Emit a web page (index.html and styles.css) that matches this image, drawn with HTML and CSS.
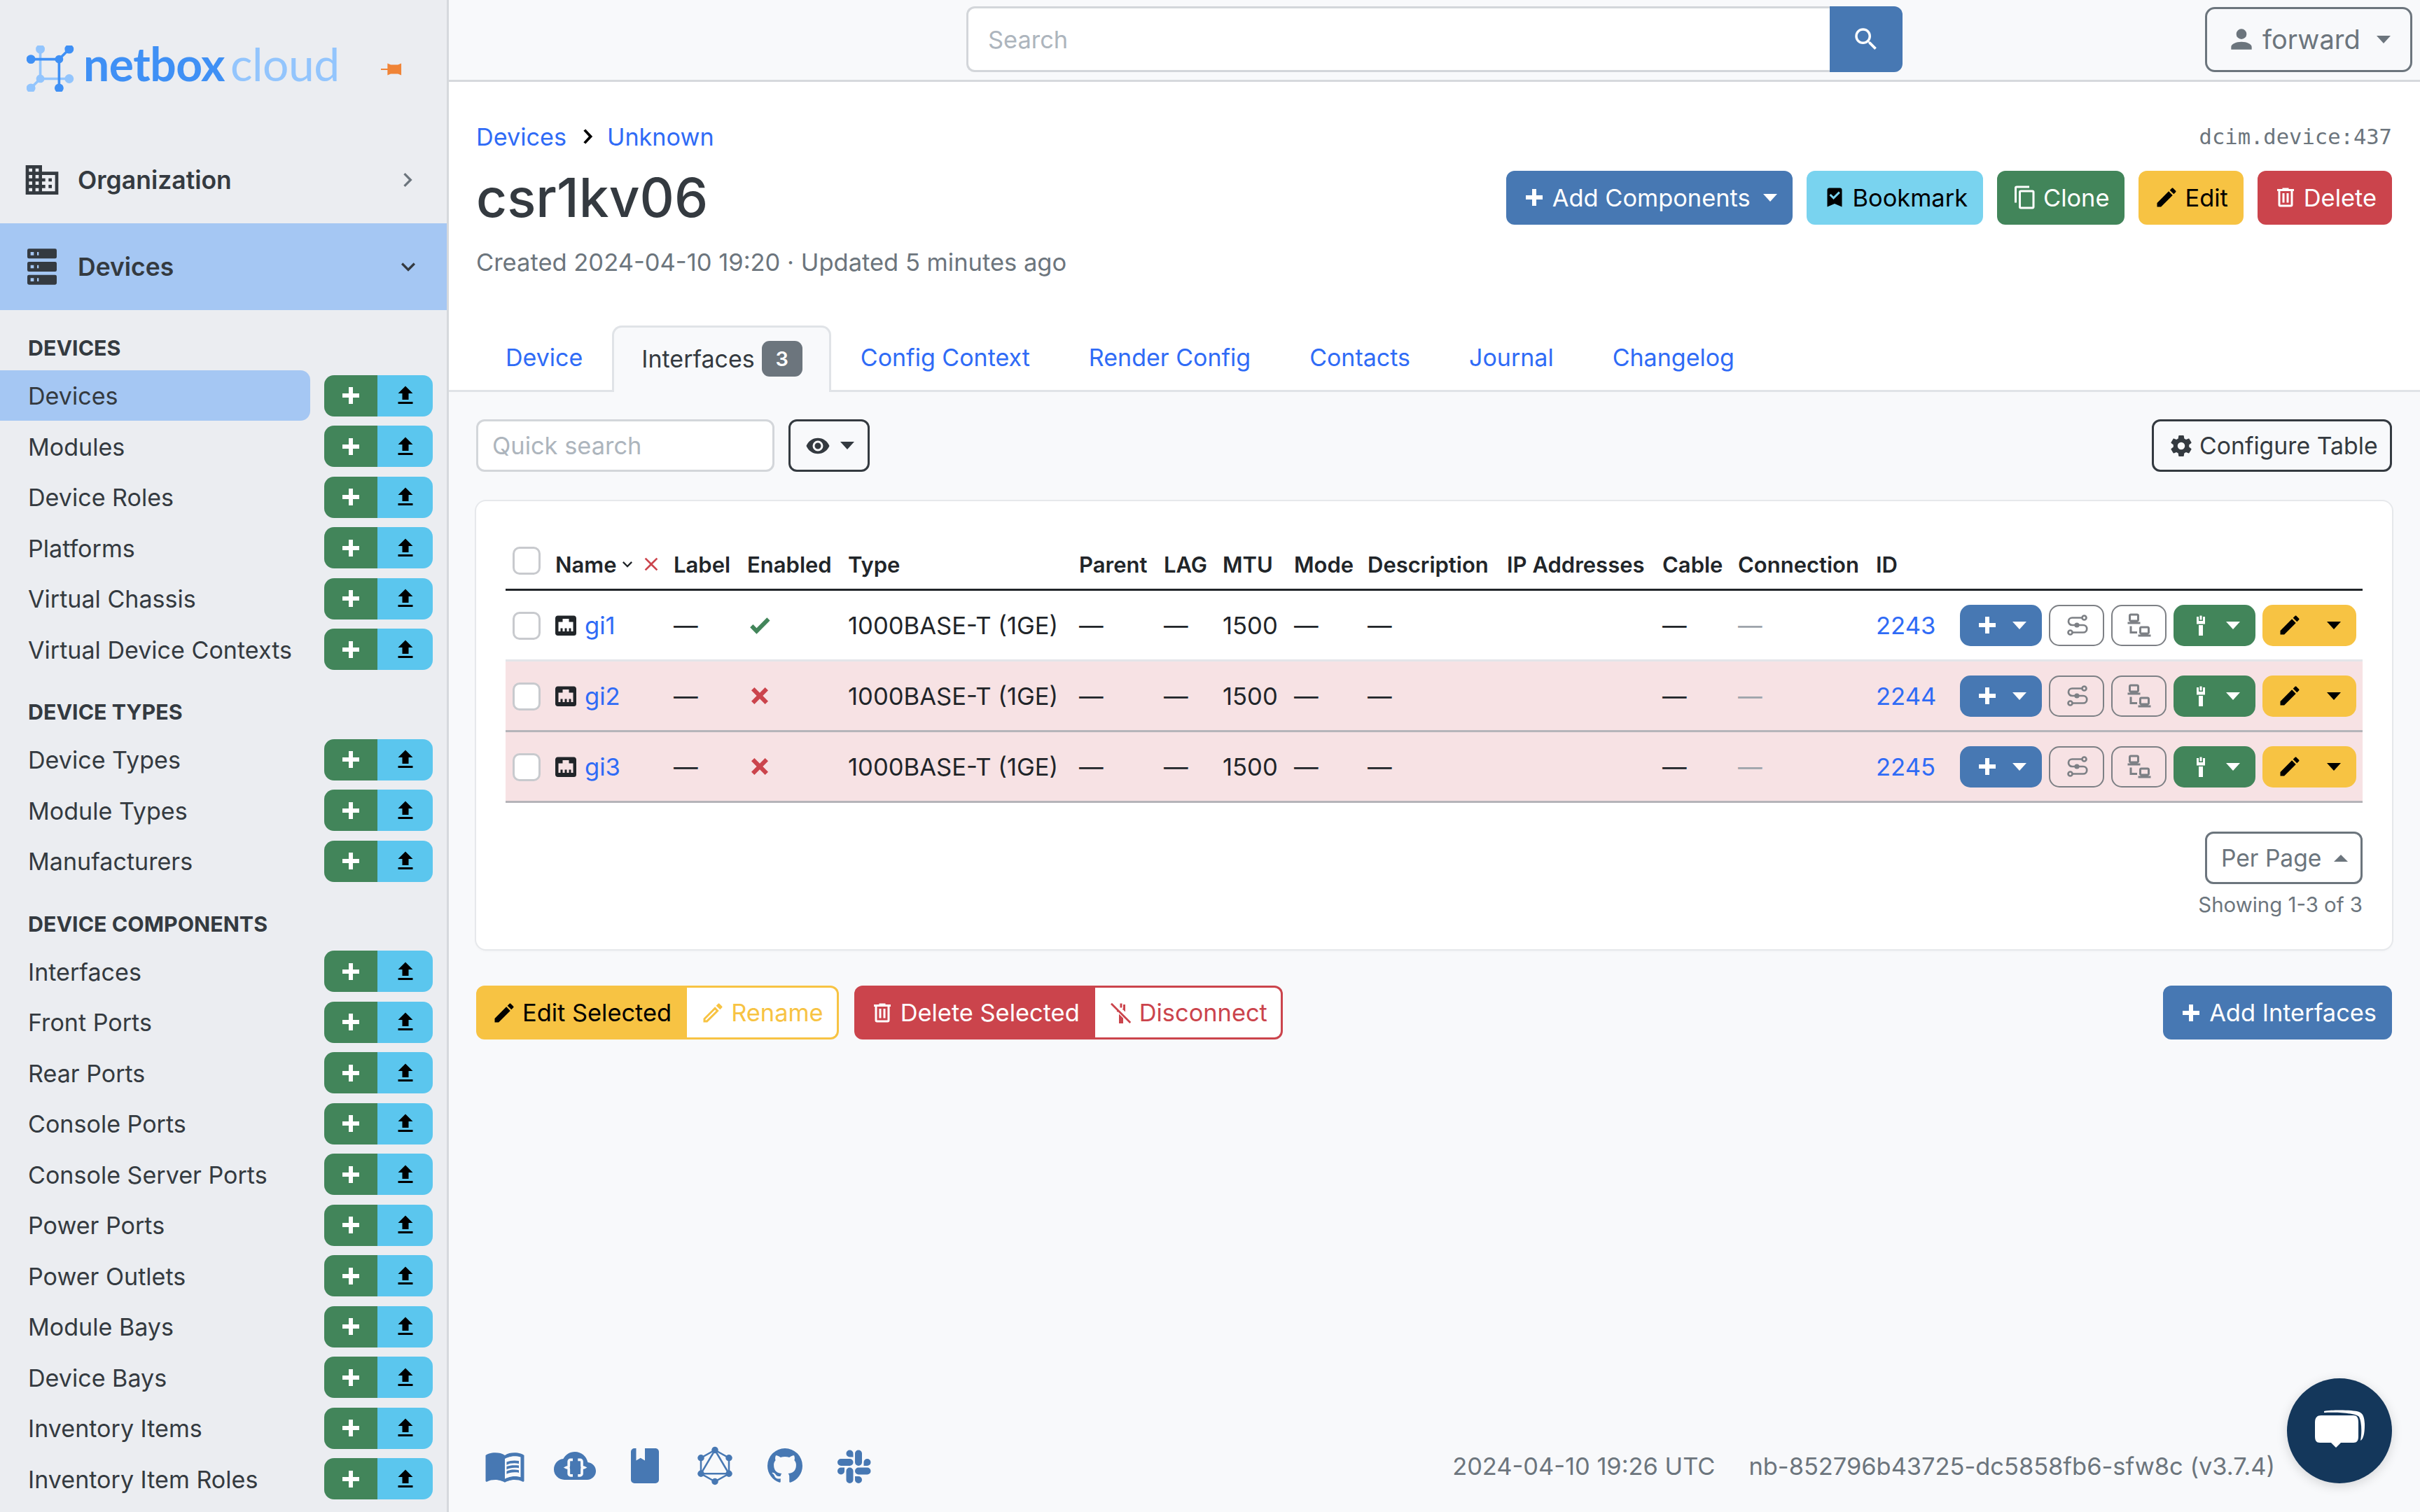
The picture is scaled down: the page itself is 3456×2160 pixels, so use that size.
FILE: index.html
```html
<!DOCTYPE html>
<html lang="en">
<head>
    <meta charset="UTF-8" />
    <title>csr1kv06 | NetBox</title>
    <link rel="stylesheet" href="styles.css">
</head>
<body>
    <svg class="sprite" xmlns="http://www.w3.org/2000/svg">
        <symbol id="i-plus" viewBox="0 0 24 24"><path d="M20 14H14V20H10V14H4V10H10V4H14V10H20V14Z"/></symbol>
        <symbol id="i-upload" viewBox="0 0 24 24"><path d="M9,16V10H5L12,3L19,10H15V16H9M5,20V18H19V20H5Z"/></symbol>
        <symbol id="i-pencil" viewBox="0 0 24 24"><path d="M20.71,7.04C21.1,6.65 21.1,6 20.71,5.63L18.37,3.29C18,2.9 17.35,2.9 16.96,3.29L15.12,5.12L18.87,8.87M3,17.25V21H6.75L17.81,9.93L14.06,6.18L3,17.25Z"/></symbol>
        <symbol id="i-pencil-o" viewBox="0 0 24 24"><path d="M14.06,9L15,9.94L5.92,19H5V18.08L14.06,9M17.66,3C17.41,3 17.15,3.1 16.96,3.29L15.13,5.12L18.88,8.87L20.71,7.04C21.1,6.65 21.1,6 20.71,5.63L18.37,3.29C18.17,3.09 17.92,3 17.66,3M14.06,6.19L3,17.25V21H6.75L17.81,9.94L14.06,6.19Z"/></symbol>
        <symbol id="i-trash" viewBox="0 0 24 24"><path d="M9,3V4H4V6H5V19A2,2 0 0,0 7,21H17A2,2 0 0,0 19,19V6H20V4H15V3H9M7,6H17V19H7V6M9,8V17H11V8H9M13,8V17H15V8H13Z"/></symbol>
        <symbol id="i-copy" viewBox="0 0 24 24"><path d="M19,21H8V7H19M19,5H8A2,2 0 0,0 6,7V21A2,2 0 0,0 8,23H19A2,2 0 0,0 21,21V7A2,2 0 0,0 19,5M16,1H4A2,2 0 0,0 2,3V17H4V3H16V1Z"/></symbol>
        <symbol id="i-bookmark" viewBox="0 0 24 24"><path d="M17,3A2,2 0 0,1 19,5V21L12,18L5,21V5C5,3.89 5.9,3 7,3H17M11,14L17.25,7.76L15.84,6.34L11,11.18L8.41,8.59L7,10L11,14Z"/></symbol>
        <symbol id="i-search" viewBox="0 0 24 24"><path d="M9.5,3A6.5,6.5 0 0,1 16,9.5C16,11.11 15.41,12.59 14.44,13.73L14.71,14H15.5L20.5,19L19,20.5L14,15.5V14.71L13.73,14.44C12.59,15.41 11.11,16 9.5,16A6.5,6.5 0 0,1 3,9.5A6.5,6.5 0 0,1 9.5,3M9.5,5C7,5 5,7 5,9.5C5,12 7,14 9.5,14C12,14 14,12 14,9.5C14,7 12,5 9.5,5Z"/></symbol>
        <symbol id="i-account" viewBox="0 0 24 24"><path d="M12,4A4,4 0 0,1 16,8A4,4 0 0,1 12,12A4,4 0 0,1 8,8A4,4 0 0,1 12,4M12,14C16.42,14 20,15.79 20,18V20H4V18C4,15.79 7.58,14 12,14Z"/></symbol>
        <symbol id="i-eye" viewBox="0 0 24 24"><path d="M12,9A3,3 0 0,0 9,12A3,3 0 0,0 12,15A3,3 0 0,0 15,12A3,3 0 0,0 12,9M12,17A5,5 0 0,1 7,12A5,5 0 0,1 12,7A5,5 0 0,1 17,12A5,5 0 0,1 12,17M12,4.5C7,4.5 2.73,7.61 1,12C2.73,16.39 7,19.5 12,19.5C17,19.5 21.27,16.39 23,12C21.27,7.61 17,4.5 12,4.5Z"/></symbol>
        <symbol id="i-cog" viewBox="0 0 24 24"><path d="M12,15.5A3.5,3.5 0 0,1 8.5,12A3.5,3.5 0 0,1 12,8.5A3.5,3.5 0 0,1 15.5,12A3.5,3.5 0 0,1 12,15.5M19.43,12.97C19.47,12.65 19.5,12.33 19.5,12C19.5,11.67 19.47,11.34 19.43,11L21.54,9.37C21.73,9.22 21.78,8.95 21.66,8.73L19.66,5.27C19.54,5.05 19.27,4.96 19.05,5.05L16.56,6.05C16.04,5.66 15.5,5.32 14.87,5.07L14.5,2.42C14.46,2.18 14.25,2 14,2H10C9.75,2 9.54,2.18 9.5,2.42L9.13,5.07C8.5,5.32 7.96,5.66 7.44,6.05L4.95,5.05C4.73,4.96 4.46,5.05 4.34,5.27L2.34,8.73C2.21,8.95 2.27,9.22 2.46,9.37L4.57,11C4.53,11.34 4.5,11.67 4.5,12C4.5,12.33 4.53,12.65 4.57,12.97L2.46,14.63C2.27,14.78 2.21,15.05 2.34,15.27L4.34,18.73C4.46,18.95 4.73,19.03 4.95,18.95L7.44,17.94C7.96,18.34 8.5,18.68 9.13,18.93L9.5,21.58C9.54,21.82 9.75,22 10,22H14C14.25,22 14.46,21.82 14.5,21.58L14.87,18.93C15.5,18.67 16.04,18.34 16.56,17.94L19.05,18.95C19.27,19.03 19.54,18.95 19.66,18.73L21.66,15.27C21.78,15.05 21.73,14.78 21.54,14.63L19.43,12.97Z"/></symbol>
        <symbol id="i-check" viewBox="0 0 24 24"><path d="M9,20.42L2.79,14.21L5.62,11.38L9,14.77L18.88,4.88L21.71,7.71L9,20.42Z"/></symbol>
        <symbol id="i-close-thick" viewBox="0 0 24 24"><path d="M20 6.91L17.09 4L12 9.09L6.91 4L4 6.91L9.09 12L4 17.09L6.91 20L12 14.91L17.09 20L20 17.09L14.91 12L20 6.91Z"/></symbol>
        <symbol id="i-close" viewBox="0 0 24 24"><path d="M19,6.41L17.59,5L12,10.59L6.41,5L5,6.41L10.59,12L5,17.59L6.41,19L12,13.41L17.59,19L19,17.59L13.41,12L19,6.41Z"/></symbol>
        <symbol id="i-ethernet" viewBox="0 0 24 24"><path d="M7,15H9V18H11V15H13V18H15V15H17V18H19V9H15V6H9V9H5V18H7V15M4.38,3H19.63C20.94,3 22,4.06 22,5.38V19.63A2.37,2.37 0 0,1 19.63,22H4.38C3.06,22 2,20.94 2,19.63V5.38C2,4.06 3.06,3 4.38,3Z"/></symbol>
        <symbol id="i-cable" viewBox="0 0 24 24"><path d="M11,3V7H13V3H11M8,4V11H16V4H14V8H10V4H8M10,12V22H14V12H10Z"/></symbol>
        <symbol id="i-cable-off" viewBox="0 0 24 24"><path d="M11,3V7H13V3H11M14,4V8H13L16,11V4H14M8,8V11H10.5L8,8M10,13V22H14V17L10,13M3.3,2.5L2,3.8L20.2,22L21.5,20.7L3.3,2.5Z"/></symbol>
        <symbol id="i-lan" viewBox="0 0 24 24"><path d="M4,1C2.89,1 2,1.89 2,3V7C2,8.11 2.89,9 4,9H1V11H13V9H10C11.11,9 12,8.11 12,7V3C12,1.89 11.11,1 10,1H4M4,3H10V7H4V3M3,13V18L3,20H10V18H5V13H3M14,13C12.89,13 12,13.89 12,15V19C12,20.11 12.89,21 14,21H11V23H23V21H20C21.11,21 22,20.11 22,19V15C22,13.89 21.11,13 20,13H14M14,15H20V19H14V15Z"/></symbol>
        <symbol id="i-trace" viewBox="0 0 24 24"><g fill="none" stroke="currentColor" stroke-width="1.8"><path d="M17 5H7.5A3.5 3.5 0 0 0 7.5 12H18A3.5 3.5 0 0 1 18 19H7.7"/><circle cx="19" cy="5" r="2"/><circle cx="5.7" cy="19" r="2"/></g><circle cx="12" cy="12" r="2.4"/></symbol>
        <symbol id="i-domain" viewBox="0 0 24 24"><path d="M18,15H16V17H18M18,11H16V13H18M20,19H12V17H14V15H12V13H14V11H12V9H20M10,7H8V5H10M10,11H8V9H10M10,15H8V13H10M10,19H8V17H10M6,7H4V5H6M6,11H4V9H6M6,15H4V13H6M6,19H4V17H6M12,7V3H2V21H22V7H12Z"/></symbol>
        <symbol id="i-server" viewBox="0 0 24 24"><path d="M4,1H20A1,1 0 0,1 21,2V6A1,1 0 0,1 20,7H4A1,1 0 0,1 3,6V2A1,1 0 0,1 4,1M4,9H20A1,1 0 0,1 21,10V14A1,1 0 0,1 20,15H4A1,1 0 0,1 3,14V10A1,1 0 0,1 4,9M4,17H20A1,1 0 0,1 21,18V22A1,1 0 0,1 20,23H4A1,1 0 0,1 3,22V18A1,1 0 0,1 4,17M9,5H10V3H9V5M9,13H10V11H9V13M9,21H10V19H9V21M5,3V5H7V3H5M5,11V13H7V11H5M5,19V21H7V19H5Z"/></symbol>
        <symbol id="i-book" viewBox="0 0 24 24"><path d="M12 21.5C10.65 20.65 8.2 20 6.5 20C4.85 20 3.15 20.3 1.75 21.05C1.65 21.1 1.6 21.1 1.5 21.1C1.25 21.1 1 20.85 1 20.6V6C1.6 5.55 2.25 5.25 3 5C4.11 4.65 5.33 4.5 6.5 4.5C8.45 4.5 10.55 4.9 12 6C13.45 4.9 15.55 4.5 17.5 4.5C18.67 4.5 19.89 4.65 21 5C21.75 5.25 22.4 5.55 23 6V20.6C23 20.85 22.75 21.1 22.5 21.1C22.4 21.1 22.35 21.1 22.25 21.05C20.85 20.3 19.15 20 17.5 20C15.8 20 13.35 20.65 12 21.5M12 8V19.5C13.35 18.65 15.8 18 17.5 18C18.7 18 19.9 18.15 21 18.5V7C19.9 6.65 18.7 6.5 17.5 6.5C15.8 6.5 13.35 7.15 12 8M13 11.5C14.11 10.82 15.6 10.5 17.5 10.5C18.41 10.5 19.26 10.59 20 10.78V9.23C19.13 9.08 18.29 9 17.5 9C15.73 9 14.23 9.28 13 9.84V11.5M17.5 11.67C15.79 11.67 14.29 11.93 13 12.44V14.1C14.11 13.44 15.6 13.1 17.5 13.1C18.54 13.1 19.38 13.18 20 13.34V11.82C19.13 11.72 18.29 11.67 17.5 11.67M20 14.5C19.13 14.32 18.29 14.24 17.5 14.24C15.67 14.24 14.17 14.5 13 15.07V16.73C14.11 16.07 15.6 15.73 17.5 15.73C18.54 15.73 19.38 15.81 20 15.97V14.5Z"/></symbol>
        <symbol id="i-cloud" viewBox="0 0 24 24"><path d="M19.35,10.03C18.67,6.59 15.64,4 12,4C9.11,4 6.6,5.64 5.35,8.03C2.34,8.36 0,10.9 0,14A6,6 0 0,0 6,20H19A5,5 0 0,0 24,15C24,12.36 21.95,10.22 19.35,10.03Z"/><g fill="none" stroke="#f8f9fb" stroke-width="1.5"><path d="M10.8 8.5H9.5A1 1 0 0 0 8.5 9.5V12A1 1 0 0 1 7 13A1 1 0 0 1 8.5 14V16.5A1 1 0 0 0 9.5 17.5H10.8"/><path d="M13.7 8.5H15A1 1 0 0 1 16 9.5V12A1 1 0 0 0 17.5 13A1 1 0 0 0 16 14V16.5A1 1 0 0 1 15 17.5H13.7"/></g></symbol>
        <symbol id="i-notebook" viewBox="0 0 24 24"><path d="M18,22A2,2 0 0,0 20,20V4C20,2.89 19.1,2 18,2H12V9L9.5,7.5L7,9V2H6A2,2 0 0,0 4,4V20A2,2 0 0,0 6,22H18Z"/></symbol>
        <symbol id="i-graphql" viewBox="0 0 24 24"><g fill="none" stroke="currentColor" stroke-width="1"><path d="M12 3L20 7.5V16.5L12 21L4 16.5V7.5Z"/><path d="M12 3L20 16.5H4Z"/></g><circle cx="12" cy="3" r="1.9"/><circle cx="20" cy="7.5" r="1.9"/><circle cx="20" cy="16.5" r="1.9"/><circle cx="12" cy="21" r="1.9"/><circle cx="4" cy="16.5" r="1.9"/><circle cx="4" cy="7.5" r="1.9"/></symbol>
        <symbol id="i-github" viewBox="0 0 24 24"><path d="M12,2A10,10 0 0,0 2,12C2,16.42 4.87,20.17 8.84,21.5C9.34,21.58 9.5,21.27 9.5,21C9.5,20.77 9.5,20.14 9.5,19.31C6.73,19.91 6.14,17.97 6.14,17.97C5.68,16.81 5.03,16.5 5.03,16.5C4.12,15.88 5.1,15.9 5.1,15.9C6.1,15.97 6.63,16.93 6.63,16.93C7.5,18.45 8.97,18 9.54,17.76C9.63,17.11 9.89,16.67 10.17,16.42C7.95,16.17 5.62,15.31 5.62,11.5C5.62,10.39 6,9.5 6.65,8.79C6.55,8.54 6.2,7.5 6.75,6.15C6.75,6.15 7.59,5.88 9.5,7.17C10.29,6.95 11.15,6.84 12,6.84C12.85,6.84 13.71,6.95 14.5,7.17C16.41,5.88 17.25,6.15 17.25,6.15C17.8,7.5 17.45,8.54 17.35,8.79C18,9.5 18.38,10.39 18.38,11.5C18.38,15.32 16.04,16.16 13.81,16.41C14.17,16.72 14.5,17.33 14.5,18.26C14.5,19.6 14.5,20.68 14.5,21C14.5,21.27 14.66,21.59 15.17,21.5C19.14,20.16 22,16.42 22,12A10,10 0 0,0 12,2Z"/></symbol>
        <symbol id="i-slack" viewBox="0 0 24 24"><path d="M6,15A2,2 0 0,1 4,17A2,2 0 0,1 2,15A2,2 0 0,1 4,13H6V15M7,15A2,2 0 0,1 9,13A2,2 0 0,1 11,15V20A2,2 0 0,1 9,22A2,2 0 0,1 7,20V15M9,7A2,2 0 0,1 7,5A2,2 0 0,1 9,3A2,2 0 0,1 11,5V7H9M9,8A2,2 0 0,1 11,10A2,2 0 0,1 9,12H4A2,2 0 0,1 2,10A2,2 0 0,1 4,8H9M17,10A2,2 0 0,1 19,8A2,2 0 0,1 21,10A2,2 0 0,1 19,12H17V10M16,10A2,2 0 0,1 14,12A2,2 0 0,1 12,10V5A2,2 0 0,1 14,3A2,2 0 0,1 16,5V10M14,18A2,2 0 0,1 16,20A2,2 0 0,1 14,22A2,2 0 0,1 12,20V18H14M14,17A2,2 0 0,1 12,15A2,2 0 0,1 14,13H19A2,2 0 0,1 21,15A2,2 0 0,1 19,17H14Z"/></symbol>
    </svg>

    <div class="app">
        <aside class="sidebar">
            <div class="brand">
                <a class="logo" href="#">
                    <svg class="logo-mark" viewBox="0 0 64 64">
                        <g stroke="#93c5fd" stroke-width="3.5" fill="#93c5fd">
                            <path d="M18 6V46M18 46H58M18 46L5 59" fill="none"/>
                            <circle cx="18" cy="5" r="4.5"/><circle cx="18" cy="46" r="4"/><circle cx="58" cy="46" r="4.5"/><circle cx="5" cy="59" r="4.5"/>
                        </g>
                        <g stroke="#3f90f5" stroke-width="3.5" fill="#3f90f5">
                            <path d="M5 19H44M44 19V59M44 19L58 5" fill="none"/>
                            <circle cx="5" cy="19" r="4.5"/><circle cx="44" cy="19" r="4"/><circle cx="44" cy="59" r="4.5"/><circle cx="58" cy="5" r="4.5"/>
                        </g>
                    </svg>
                    <span class="logo-net">netbox</span><span class="logo-cloud">cloud</span>
                </a>
                <svg class="pin" viewBox="0 0 32 20"><path d="M10 1L15 3H26L31 1V19L26 17H15L10 19V11H0V9H10Z"/></svg>
            </div>

            <a class="nav-group" href="#">
                <svg class="nav-icon"><use href="#i-domain"/></svg>
                <span>Organization</span>
                <svg class="nav-chevron" viewBox="0 0 24 24"><path d="M8.6 16.6L13.2 12L8.6 7.4L10 6L16 12L10 18Z"/></svg>
            </a>
            <a class="nav-group active" href="#">
                <svg class="nav-icon"><use href="#i-server"/></svg>
                <span>Devices</span>
                <svg class="nav-chevron" viewBox="0 0 24 24"><path d="M7.4 8.6L12 13.2L16.6 8.6L18 10L12 16L6 10Z"/></svg>
            </a>

            <div class="nav-label">DEVICES</div>
            <div class="nav-row"><a class="nav-link current" href="#">Devices</a><span class="quick"><a class="q-add" href="#"><svg><use href="#i-plus"/></svg></a><a class="q-up" href="#"><svg><use href="#i-upload"/></svg></a></span></div>
            <div class="nav-row"><a class="nav-link" href="#">Modules</a><span class="quick"><a class="q-add" href="#"><svg><use href="#i-plus"/></svg></a><a class="q-up" href="#"><svg><use href="#i-upload"/></svg></a></span></div>
            <div class="nav-row"><a class="nav-link" href="#">Device Roles</a><span class="quick"><a class="q-add" href="#"><svg><use href="#i-plus"/></svg></a><a class="q-up" href="#"><svg><use href="#i-upload"/></svg></a></span></div>
            <div class="nav-row"><a class="nav-link" href="#">Platforms</a><span class="quick"><a class="q-add" href="#"><svg><use href="#i-plus"/></svg></a><a class="q-up" href="#"><svg><use href="#i-upload"/></svg></a></span></div>
            <div class="nav-row"><a class="nav-link" href="#">Virtual Chassis</a><span class="quick"><a class="q-add" href="#"><svg><use href="#i-plus"/></svg></a><a class="q-up" href="#"><svg><use href="#i-upload"/></svg></a></span></div>
            <div class="nav-row"><a class="nav-link" href="#">Virtual Device Contexts</a><span class="quick"><a class="q-add" href="#"><svg><use href="#i-plus"/></svg></a><a class="q-up" href="#"><svg><use href="#i-upload"/></svg></a></span></div>

            <div class="nav-label">DEVICE TYPES</div>
            <div class="nav-row"><a class="nav-link" href="#">Device Types</a><span class="quick"><a class="q-add" href="#"><svg><use href="#i-plus"/></svg></a><a class="q-up" href="#"><svg><use href="#i-upload"/></svg></a></span></div>
            <div class="nav-row"><a class="nav-link" href="#">Module Types</a><span class="quick"><a class="q-add" href="#"><svg><use href="#i-plus"/></svg></a><a class="q-up" href="#"><svg><use href="#i-upload"/></svg></a></span></div>
            <div class="nav-row"><a class="nav-link" href="#">Manufacturers</a><span class="quick"><a class="q-add" href="#"><svg><use href="#i-plus"/></svg></a><a class="q-up" href="#"><svg><use href="#i-upload"/></svg></a></span></div>

            <div class="nav-label">DEVICE COMPONENTS</div>
            <div class="nav-row"><a class="nav-link" href="#">Interfaces</a><span class="quick"><a class="q-add" href="#"><svg><use href="#i-plus"/></svg></a><a class="q-up" href="#"><svg><use href="#i-upload"/></svg></a></span></div>
            <div class="nav-row"><a class="nav-link" href="#">Front Ports</a><span class="quick"><a class="q-add" href="#"><svg><use href="#i-plus"/></svg></a><a class="q-up" href="#"><svg><use href="#i-upload"/></svg></a></span></div>
            <div class="nav-row"><a class="nav-link" href="#">Rear Ports</a><span class="quick"><a class="q-add" href="#"><svg><use href="#i-plus"/></svg></a><a class="q-up" href="#"><svg><use href="#i-upload"/></svg></a></span></div>
            <div class="nav-row"><a class="nav-link" href="#">Console Ports</a><span class="quick"><a class="q-add" href="#"><svg><use href="#i-plus"/></svg></a><a class="q-up" href="#"><svg><use href="#i-upload"/></svg></a></span></div>
            <div class="nav-row"><a class="nav-link" href="#">Console Server Ports</a><span class="quick"><a class="q-add" href="#"><svg><use href="#i-plus"/></svg></a><a class="q-up" href="#"><svg><use href="#i-upload"/></svg></a></span></div>
            <div class="nav-row"><a class="nav-link" href="#">Power Ports</a><span class="quick"><a class="q-add" href="#"><svg><use href="#i-plus"/></svg></a><a class="q-up" href="#"><svg><use href="#i-upload"/></svg></a></span></div>
            <div class="nav-row"><a class="nav-link" href="#">Power Outlets</a><span class="quick"><a class="q-add" href="#"><svg><use href="#i-plus"/></svg></a><a class="q-up" href="#"><svg><use href="#i-upload"/></svg></a></span></div>
            <div class="nav-row"><a class="nav-link" href="#">Module Bays</a><span class="quick"><a class="q-add" href="#"><svg><use href="#i-plus"/></svg></a><a class="q-up" href="#"><svg><use href="#i-upload"/></svg></a></span></div>
            <div class="nav-row"><a class="nav-link" href="#">Device Bays</a><span class="quick"><a class="q-add" href="#"><svg><use href="#i-plus"/></svg></a><a class="q-up" href="#"><svg><use href="#i-upload"/></svg></a></span></div>
            <div class="nav-row"><a class="nav-link" href="#">Inventory Items</a><span class="quick"><a class="q-add" href="#"><svg><use href="#i-plus"/></svg></a><a class="q-up" href="#"><svg><use href="#i-upload"/></svg></a></span></div>
            <div class="nav-row"><a class="nav-link" href="#">Inventory Item Roles</a><span class="quick"><a class="q-add" href="#"><svg><use href="#i-plus"/></svg></a><a class="q-up" href="#"><svg><use href="#i-upload"/></svg></a></span></div>
        </aside>

        <main class="main">
            <header class="topbar">
                <form class="search">
                    <input class="search-input" type="text" placeholder="Search">
                    <button class="search-btn" type="button"><svg class="icon"><use href="#i-search"/></svg></button>
                </form>
                <button class="user-btn" type="button"><svg class="icon"><use href="#i-account"/></svg>forward<span class="caret"></span></button>
            </header>

            <section class="page-head">
                <div class="crumb-row">
                    <nav class="breadcrumb"><a href="#">Devices</a><svg class="crumb-sep" viewBox="0 0 24 24"><path d="M8 5L10.5 3L19 12L10.5 21L8 19L14.5 12Z"/></svg><a href="#">Unknown</a></nav>
                    <code class="object-id">dcim.device:437</code>
                </div>
                <div class="title-row">
                    <h1>csr1kv06</h1>
                    <div class="head-actions">
                        <a class="btn blue" href="#"><svg class="icon"><use href="#i-plus"/></svg>Add Components<span class="caret"></span></a>
                        <a class="btn cyan" href="#"><svg class="icon"><use href="#i-bookmark"/></svg>Bookmark</a>
                        <a class="btn green" href="#"><svg class="icon"><use href="#i-copy"/></svg>Clone</a>
                        <a class="btn yellow" href="#"><svg class="icon"><use href="#i-pencil"/></svg>Edit</a>
                        <a class="btn red" href="#"><svg class="icon"><use href="#i-trash"/></svg>Delete</a>
                    </div>
                </div>
                <p class="meta">Created 2024-04-10 19:20 · Updated 5 minutes ago</p>
                <ul class="tabs">
                    <li><a href="#">Device</a></li>
                    <li class="active"><a href="#">Interfaces<span class="badge">3</span></a></li>
                    <li><a href="#">Config Context</a></li>
                    <li><a href="#">Render Config</a></li>
                    <li><a href="#">Contacts</a></li>
                    <li><a href="#">Journal</a></li>
                    <li><a href="#">Changelog</a></li>
                </ul>
            </section>

            <section class="content">
                <div class="filters">
                    <input class="quick-search" type="text" placeholder="Quick search">
                    <button class="outline-btn eye-btn" type="button"><svg class="icon"><use href="#i-eye"/></svg><span class="caret"></span></button>
                    <button class="outline-btn config-btn" type="button"><svg class="icon"><use href="#i-cog"/></svg>Configure Table</button>
                </div>

                <div class="card">
                    <table class="iface-table">
                        <colgroup>
                            <col class="c-select"><col class="c-name"><col class="c-label"><col class="c-enabled"><col class="c-type"><col class="c-parent"><col class="c-lag"><col class="c-mtu"><col class="c-mode"><col class="c-desc"><col class="c-ip"><col class="c-cable"><col class="c-conn"><col class="c-id"><col class="c-actions">
                        </colgroup>
                        <thead>
                            <tr>
                                <th><input class="check head-check" type="checkbox"></th>
                                <th><span class="sort-head">Name<svg viewBox="0 0 24 24"><path d="M7.4 8.6L12 13.2L16.6 8.6L18 10L12 16L6 10Z"/></svg><svg class="clear-sort"><use href="#i-close"/></svg></span></th>
                                <th>Label</th><th>Enabled</th><th>Type</th><th>Parent</th><th>LAG</th><th>MTU</th><th>Mode</th><th>Description</th><th>IP Addresses</th><th>Cable</th><th>Connection</th><th>ID</th><th></th>
                            </tr>
                        </thead>
                        <tbody>
                            <tr>
                                <td><input class="check" type="checkbox"></td>
                                <td><span class="port"><svg><use href="#i-ethernet"/></svg><a href="#">gi1</a></span></td>
                                <td>—</td><td><svg class="state ok"><use href="#i-check"/></svg></td><td>1000BASE-T (1GE)</td><td>—</td><td>—</td><td>1500</td><td>—</td><td>—</td><td></td><td>—</td><td class="muted">—</td><td><a href="#">2243</a></td>
                                <td><div class="row-actions">
                                    <a class="rb blue w-add" href="#"><svg><use href="#i-plus"/></svg><span class="caret"></span></a>
                                    <a class="rb plain" href="#"><svg><use href="#i-trace"/></svg></a>
                                    <a class="rb plain" href="#"><svg><use href="#i-lan"/></svg></a>
                                    <a class="rb green w-add" href="#"><svg><use href="#i-cable"/></svg><span class="caret"></span></a>
                                    <a class="rb yellow w-edit" href="#"><svg><use href="#i-pencil"/></svg><span class="caret"></span></a>
                                </div></td>
                            </tr>
                            <tr class="danger">
                                <td><input class="check" type="checkbox"></td>
                                <td><span class="port"><svg><use href="#i-ethernet"/></svg><a href="#">gi2</a></span></td>
                                <td>—</td><td><svg class="state off"><use href="#i-close-thick"/></svg></td><td>1000BASE-T (1GE)</td><td>—</td><td>—</td><td>1500</td><td>—</td><td>—</td><td></td><td>—</td><td class="muted">—</td><td><a href="#">2244</a></td>
                                <td><div class="row-actions">
                                    <a class="rb blue w-add" href="#"><svg><use href="#i-plus"/></svg><span class="caret"></span></a>
                                    <a class="rb plain" href="#"><svg><use href="#i-trace"/></svg></a>
                                    <a class="rb plain" href="#"><svg><use href="#i-lan"/></svg></a>
                                    <a class="rb green w-add" href="#"><svg><use href="#i-cable"/></svg><span class="caret"></span></a>
                                    <a class="rb yellow w-edit" href="#"><svg><use href="#i-pencil"/></svg><span class="caret"></span></a>
                                </div></td>
                            </tr>
                            <tr class="danger">
                                <td><input class="check" type="checkbox"></td>
                                <td><span class="port"><svg><use href="#i-ethernet"/></svg><a href="#">gi3</a></span></td>
                                <td>—</td><td><svg class="state off"><use href="#i-close-thick"/></svg></td><td>1000BASE-T (1GE)</td><td>—</td><td>—</td><td>1500</td><td>—</td><td>—</td><td></td><td>—</td><td class="muted">—</td><td><a href="#">2245</a></td>
                                <td><div class="row-actions">
                                    <a class="rb blue w-add" href="#"><svg><use href="#i-plus"/></svg><span class="caret"></span></a>
                                    <a class="rb plain" href="#"><svg><use href="#i-trace"/></svg></a>
                                    <a class="rb plain" href="#"><svg><use href="#i-lan"/></svg></a>
                                    <a class="rb green w-add" href="#"><svg><use href="#i-cable"/></svg><span class="caret"></span></a>
                                    <a class="rb yellow w-edit" href="#"><svg><use href="#i-pencil"/></svg><span class="caret"></span></a>
                                </div></td>
                            </tr>
                        </tbody>
                    </table>
                    <div class="pager">
                        <button class="per-page" type="button">Per Page<span class="caret up"></span></button>
                        <small>Showing 1-3 of 3</small>
                    </div>
                </div>

                <div class="bulk">
                    <div class="btn-group">
                        <a class="btn yellow" href="#"><svg class="icon"><use href="#i-pencil"/></svg>Edit Selected</a>
                        <a class="btn ghost-yellow" href="#"><svg class="icon"><use href="#i-pencil-o"/></svg>Rename</a>
                    </div>
                    <div class="btn-group">
                        <a class="btn red" href="#"><svg class="icon"><use href="#i-trash"/></svg>Delete Selected</a>
                        <a class="btn ghost-red" href="#"><svg class="icon"><use href="#i-cable-off"/></svg>Disconnect</a>
                    </div>
                    <a class="btn blue add-ifaces" href="#"><svg class="icon"><use href="#i-plus"/></svg>Add Interfaces</a>
                </div>
            </section>

            <footer class="footer">
                <div class="foot-links">
                    <svg class="f-book"><use href="#i-book"/></svg>
                    <svg class="f-cloud"><use href="#i-cloud"/></svg>
                    <svg class="f-note"><use href="#i-notebook"/></svg>
                    <svg class="f-gql"><use href="#i-graphql"/></svg>
                    <svg class="f-git"><use href="#i-github"/></svg>
                    <svg class="f-slack"><use href="#i-slack"/></svg>
                </div>
                <div class="foot-text"><span>2024-04-10 19:26 UTC</span><span>nb-852796b43725-dc5858fb6-sfw8c (v3.7.4)</span></div>
            </footer>
        </main>
    </div>

    <a class="chat" href="#">
        <svg viewBox="0 0 80 64"><path d="M18 4C30 2 58 2 68 5C74 7 76 14 76 24C76 36 74 44 70 46C72 36 72 20 68 12C64 6 30 5 18 6Z"/><path d="M14 10H60C65 10 67 13 67 20V40C67 46 65 49 60 49H42L35 56L28 49H12C7 49 5 46 5 40V20C5 13 8 10 14 10Z"/></svg>
    </a>
</body>
</html>
```

FILE: styles.css
```css
* {
    box-sizing: border-box;
}

body {
    margin: 0;
    width: 3456px;
    height: 2160px;
    overflow: hidden;
    background: #f8f9fb;
    color: #212529;
    font-family: Inter, "Liberation Sans", sans-serif;
    font-size: 34.4px;
}

a {
    color: #2f6bf6;
    text-decoration: none;
}

svg {
    fill: currentColor;
}

.sprite {
    display: none;
}

.app {
    display: flex;
    height: 100%;
}

.icon {
    width: 36px;
    height: 36px;
    flex: none;
}

.caret {
    display: inline-block;
    flex: none;
    border-top: 11px solid currentColor;
    border-left: 10px solid transparent;
    border-right: 10px solid transparent;
}

.caret.up {
    border-top: 0;
    border-bottom: 10px solid currentColor;
}

/* Sidebar */
.sidebar {
    flex: none;
    width: 641px;
    height: 2160px;
    overflow: hidden;
    background: #ebedf1;
    border-right: 3px solid #d6d9dd;
    color: #343a40;
    font-size: 34.1px;
}

.brand {
    display: flex;
    align-items: flex-start;
    justify-content: space-between;
    height: 195px;
    padding: 65px 64px 0 38px;
}

.logo {
    display: flex;
    align-items: flex-start;
}

.logo-mark {
    width: 68px;
    height: 66px;
    margin-right: 13px;
}

.logo-net,
.logo-cloud {
    font-family: Lato, Inter, sans-serif;
    font-size: 66px;
    line-height: 52px;
    font-weight: 700;
    letter-spacing: -0.5px;
    color: #3f90f5;
}

.logo-cloud {
    margin-left: 8px;
    font-weight: 400;
    color: #93c5fd;
}

.pin {
    width: 30px;
    height: 20px;
    margin-top: 24px;
    fill: #f08437;
}

.nav-group {
    display: flex;
    align-items: center;
    height: 124px;
    padding: 0 36px 0 32px;
    color: #343a40;
    font-size: 35.5px;
    font-weight: 600;
}

.nav-group.active {
    background: #a5c7f3;
    margin-right: -1px;
}

.nav-icon {
    width: 56px;
    height: 56px;
    margin-right: 23px;
}

.nav-chevron {
    width: 40px;
    height: 40px;
    margin-left: auto;
    fill: #6c757d;
}

.active .nav-chevron {
    fill: #343a40;
}

.nav-label {
    display: flex;
    align-items: center;
    height: 64px;
    margin-top: 21px;
    padding-left: 40px;
    font-size: 30.4px;
    font-weight: 700;
}

.nav-group + .nav-label {
    margin-top: 22px;
}

.nav-row {
    display: flex;
    align-items: center;
    justify-content: space-between;
    height: 72.5px;
    padding-right: 20px;
}

.nav-link {
    display: flex;
    align-items: center;
    width: 443px;
    height: 72px;
    padding: 1px 0 0 40px;
    border-radius: 0 14px 14px 0;
    color: #343a40;
}

.nav-link.current {
    background: #a5c7f3;
}

.quick {
    display: flex;
    width: 155px;
    height: 59px;
    border-radius: 14px;
    overflow: hidden;
}

.quick a {
    display: flex;
    align-items: center;
    justify-content: center;
}

.quick svg {
    width: 36px;
    height: 36px;
}

.q-add {
    width: 76px;
    background: #42855a;
    color: #fff;
}

.q-up {
    width: 79px;
    background: #5bc6ee;
    color: #000;
}

/* Top bar */
.main {
    flex: 1;
    min-width: 0;
    display: flex;
    flex-direction: column;
}

.topbar {
    display: grid;
    grid-template-columns: 1fr 1337px 1fr;
    align-items: center;
    flex: none;
    height: 117px;
    padding-bottom: 2px;
    border-bottom: 3px solid #d6d9dd;
}

.search {
    grid-column: 2;
    display: flex;
    height: 94px;
}

.search-input {
    flex: 1;
    padding: 0 28px;
    font: inherit;
    background: #fff;
    border: 3px solid #d3d6da;
    border-right: 0;
    border-radius: 12px 0 0 12px;
}

.search-input::placeholder,
.quick-search::placeholder {
    color: #adb5bd;
}

.search-btn {
    display: flex;
    align-items: center;
    justify-content: center;
    width: 104px;
    border: 0;
    background: #4778b3;
    color: #fff;
    border-radius: 0 12px 12px 0;
}

.search-btn .icon {
    width: 42px;
    height: 42px;
}

.user-btn {
    justify-self: end;
    display: flex;
    align-items: center;
    width: 296px;
    height: 93px;
    margin-right: 11px;
    padding: 0 28px 0 27px;
    gap: 8px;
    font: inherit;
    font-size: 38px;
    color: #6c757d;
    background: transparent;
    border: 3px solid #6c757d;
    border-radius: 14px;
}

.user-btn .icon {
    width: 44px;
    height: 44px;
}

.user-btn .caret {
    margin-left: auto;
}

/* Page header */
.page-head {
    flex: none;
    background: #fff;
    padding: 54px 40px 0 39px;
}

.crumb-row {
    display: flex;
    align-items: center;
    justify-content: space-between;
    height: 48px;
}

.breadcrumb {
    display: flex;
    align-items: center;
    gap: 15px;
    font-size: 34.2px;
}

.crumb-sep {
    width: 28px;
    height: 28px;
    fill: #000;
}

.object-id {
    font-family: "DejaVu Sans Mono", "Liberation Mono", monospace;
    font-size: 30.5px;
    color: #6c757d;
}

.title-row {
    display: flex;
    align-items: center;
    justify-content: space-between;
    height: 126px;
}

h1 {
    margin: 0;
    font-size: 76.5px;
    font-weight: 500;
    color: #343a40;
}

.head-actions {
    display: flex;
    gap: 20px;
}

.btn {
    display: inline-flex;
    align-items: center;
    gap: 8px;
    height: 77px;
    padding: 0 22px;
    border-radius: 12px;
    white-space: nowrap;
}

.blue {
    background: #4778b3;
    color: #fff;
}

.cyan {
    background: #79d3ef;
    color: #000;
}

.green {
    background: #42855a;
    color: #fff;
}

.yellow {
    background: #f7c343;
    color: #000;
}

.red {
    background: #cb444c;
    color: #fff;
}

.head-actions .blue .caret {
    margin-left: 10px;
}

.meta {
    height: 60px;
    margin: 0;
    line-height: 60px;
    font-size: 34.5px;
    color: #6c757d;
}

.tabs {
    display: flex;
    height: 95px;
    margin: 60px -40px 0 -39px;
    padding: 0 0 0 39px;
    list-style: none;
    border-bottom: 3px solid #e0e3e7;
    font-size: 34px;
}

.tabs li {
    height: 95px;
    border: 3px solid transparent;
    border-bottom: 0;
}

.tabs a {
    display: flex;
    align-items: center;
    height: 85px;
    padding: 0 39px;
}

.tabs .active {
    background: #f8f9fb;
    border-color: #e0e3e7;
    border-radius: 14px 14px 0 0;
}

.tabs .active a {
    color: #343a40;
    padding-top: 3px;
    padding-right: 38px;
}

.badge {
    display: flex;
    align-items: center;
    justify-content: center;
    width: 58px;
    height: 51px;
    margin-left: 10px;
    border-radius: 11px;
    background: #6c757d;
    color: #fff;
    font-size: 29px;
    font-weight: 600;
}

/* Content */
.content {
    padding: 39px 40px 0 39px;
}

.filters {
    display: flex;
    align-items: stretch;
    gap: 20px;
    height: 75px;
}

.quick-search {
    width: 426px;
    padding: 0 20px;
    font: inherit;
    background: #fff;
    border: 3px solid #d3d6da;
    border-radius: 12px;
}

.outline-btn {
    display: inline-flex;
    align-items: center;
    gap: 8px;
    padding: 0 21px;
    font: inherit;
    font-size: 33.8px;
    color: #343a40;
    background: transparent;
    border: 3px solid #343a40;
    border-radius: 12px;
}

.eye-btn {
    width: 116px;
    gap: 14px;
}

.config-btn {
    margin-left: auto;
    width: 343px;
    white-space: nowrap;
}

.card {
    height: 640px;
    margin-top: 42px;
    padding: 51px 42px 0;
    background: #fff;
    border-radius: 14px;
    box-shadow: 0 0 0 2px #e6e8eb, 0 2px 4px rgba(0, 0, 0, 0.05);
}

.iface-table {
    width: 2652px;
    table-layout: fixed;
    border-collapse: separate;
    border-spacing: 0;
}

.c-select { width: 71px; }
.c-name { width: 169px; }
.c-label { width: 105px; }
.c-enabled { width: 144px; }
.c-type { width: 330px; }
.c-parent { width: 121px; }
.c-lag { width: 84px; }
.c-mtu { width: 102px; }
.c-mode { width: 105px; }
.c-desc { width: 199px; }
.c-ip { width: 222px; }
.c-cable { width: 108px; }
.c-conn { width: 197px; }
.c-id { width: 120px; }
.c-actions { width: 575px; }

.iface-table th {
    height: 77px;
    padding: 4px 0 0;
    text-align: left;
    font-size: 31px;
    font-weight: 600;
    white-space: nowrap;
    border-bottom: 3px solid #212529;
}

.iface-table td {
    height: 101px;
    padding: 0;
    white-space: nowrap;
    font-size: 34.6px;
    border-bottom: 3px solid #e3e5e9;
}

.iface-table tr.danger td {
    background: #f7e2e4;
    border-bottom-color: #b5b4b9;
}

.iface-table td.muted {
    color: #9ea4ab;
}

.check {
    appearance: none;
    display: block;
    width: 40px;
    height: 40px;
    margin: 2px 0 0 10px;
    background: #fff;
    border: 3px solid #c8cace;
    border-radius: 10px;
}

.head-check {
    margin: 0 0 10px 10px;
}

.sort-head {
    display: inline-flex;
    align-items: center;
}

.sort-head svg {
    width: 28px;
    height: 28px;
    margin-left: 1px;
}

.sort-head .clear-sort {
    width: 32px;
    height: 32px;
    margin-left: 4px;
    fill: #cb444c;
}

.port {
    display: flex;
    align-items: center;
    gap: 9px;
}

.port svg {
    width: 36px;
    height: 36px;
    margin-left: -3px;
}

.state {
    display: block;
    width: 36px;
    height: 36px;
}

.state.ok {
    fill: #42855a;
}

.state.off {
    fill: #cb444c;
}

.row-actions {
    display: flex;
    gap: 10px;
}

.rb {
    display: flex;
    align-items: center;
    justify-content: space-between;
    height: 59px;
    padding: 0 22px 0 21px;
    border-radius: 15px;
}

.rb svg {
    width: 36px;
    height: 36px;
}

.w-add {
    width: 117px;
}

.w-edit {
    width: 134px;
}

.rb.plain {
    justify-content: center;
    width: 79px;
    padding: 0;
    border: 2px solid #7d8085;
    color: #7d8085;
    background: transparent;
}

.pager {
    display: flex;
    flex-direction: column;
    align-items: flex-end;
    margin-top: 41px;
}

.per-page {
    display: flex;
    align-items: center;
    justify-content: space-between;
    width: 225px;
    height: 75px;
    padding: 0 18px 0 20px;
    font: inherit;
    font-size: 33.6px;
    color: #6c757d;
    background: transparent;
    border: 3px solid #6c757d;
    border-radius: 12px;
}

.pager small {
    margin-top: 12px;
    font-size: 29.4px;
    color: #6c757d;
}

.bulk {
    display: flex;
    gap: 22px;
    margin-top: 52px;
}

.btn-group {
    display: flex;
}

.btn-group .btn:first-child {
    border-radius: 12px 0 0 12px;
}

.btn-group .btn:last-child {
    border-radius: 0 12px 12px 0;
}

.ghost-yellow,
.ghost-red {
    padding: 0 19px;
    background: #fff;
    border: 3px solid;
    border-left: 0;
}

.ghost-yellow {
    color: #f7c343;
}

.ghost-red {
    color: #cb444c;
}

.add-ifaces {
    margin-left: auto;
}

/* Footer */
.footer {
    display: flex;
    align-items: center;
    justify-content: space-between;
    height: 120px;
    margin-top: auto;
    margin-bottom: 6px;
    padding: 0 207px 0 50px;
}

.foot-links {
    display: flex;
    align-items: center;
    color: #4778b3;
}

.foot-links svg {
    width: 60px;
    height: 60px;
    margin-right: 40px;
}

.foot-text {
    display: flex;
    gap: 48px;
    color: #6c757d;
}

.chat {
    position: absolute;
    right: 40px;
    bottom: 41px;
    display: flex;
    align-items: center;
    justify-content: center;
    width: 150px;
    height: 150px;
    border-radius: 50%;
    background: #14375b;
    box-shadow: 0 4px 16px rgba(0, 0, 0, 0.15);
}

.chat svg {
    width: 80px;
    height: 64px;
    fill: #fff;
}
```
